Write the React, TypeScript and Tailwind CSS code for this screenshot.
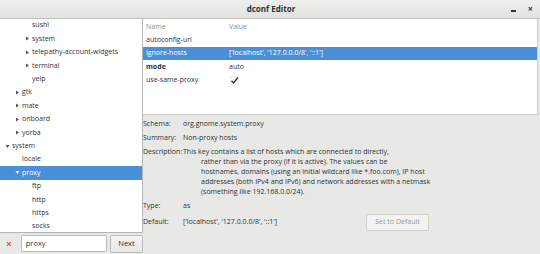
import React from 'react';

type TreeRow = { label: string; indent: number; arrow?: 'right' | 'down'; selected?: boolean };

const treeRows: TreeRow[] = [
  { label: 'sushi', indent: 32 },
  { label: 'system', indent: 32, arrow: 'right' },
  { label: 'telepathy-account-widgets', indent: 32, arrow: 'right' },
  { label: 'terminal', indent: 32, arrow: 'right' },
  { label: 'yelp', indent: 32 },
  { label: 'gtk', indent: 22, arrow: 'right' },
  { label: 'mate', indent: 22, arrow: 'right' },
  { label: 'onboard', indent: 22, arrow: 'right' },
  { label: 'yorba', indent: 22, arrow: 'right' },
  { label: 'system', indent: 12, arrow: 'down' },
  { label: 'locale', indent: 22 },
  { label: 'proxy', indent: 22, arrow: 'down', selected: true },
  { label: 'ftp', indent: 32 },
  { label: 'http', indent: 32 },
  { label: 'https', indent: 32 },
  { label: 'socks', indent: 32 },
];

const keys = [
  { name: 'autoconfig-url', value: '' },
  { name: 'ignore-hosts', value: "['localhost', '127.0.0.0/8', '::1']", selected: true },
  { name: 'mode', value: 'auto', bold: true },
  { name: 'use-same-proxy', value: 'check' },
];

const Arrow = ({ dir, light }: { dir: 'right' | 'down'; light?: boolean }) => (
  <svg width="5" height="5" viewBox="0 0 5 5" className="shrink-0">
    {dir === 'right' ? (
      <polygon points="1,0.5 4,2.5 1,4.5" fill={light ? '#ffffff' : '#555753'} />
    ) : (
      <polygon points="0.5,1 4.5,1 2.5,4" fill={light ? '#ffffff' : '#555753'} />
    )}
  </svg>
);

const Check = () => (
  <svg width="9" height="9" viewBox="0 0 9 9">
    <rect x="0.5" y="0.5" width="8" height="8" fill="none" stroke="#dcdcdc" strokeWidth="0.5" />
    <path d="M1.5 4.8 L3.6 6.9 L7.8 1.5" fill="none" stroke="#2e3436" strokeWidth="1.4" />
  </svg>
);

const descLines = [
  'rather than via the proxy (if it is active). The values can be',
  'hostnames, domains (using an initial wildcard like *.foo.com), IP host',
  'addresses (both IPv4 and IPv6) and network addresses with a netmask',
  '(something like 192.168.0.0/24).',
];

export default function App() {
  return (
    <div className="w-[540px] h-[254px] overflow-hidden bg-[#e8e8e7] text-[#2e3436] text-[7px] font-['Open_Sans',sans-serif] flex flex-col">
      {/* title bar */}
      <div className="h-[19px] shrink-0 flex items-center bg-gradient-to-b from-[#efefee] to-[#e2e2e0] border-b border-[#c4c2bd] relative">
        <div className="flex-1 text-center font-bold text-[8px] pl-[2px]">dconf Editor</div>
        <div className="absolute right-[24px] top-[10px] w-[5px] h-[1.5px] bg-[#2e3436]" />
        <div className="absolute right-[7px] top-[2px] text-[9px] font-bold leading-[14px]">×</div>
      </div>

      <div className="flex flex-1 min-h-0">
        {/* left column */}
        <div className="w-[143px] shrink-0 flex flex-col">
          <div className="h-[214px] bg-white border-r border-b border-[#b6b6b3] overflow-hidden">
            {treeRows.map((r, i) => (
              <div
                key={i}
                className={`h-[13.4px] flex items-center relative ${r.selected ? 'bg-[#4a90d9] text-white' : ''}`}
                style={{ paddingLeft: r.indent }}
              >
                {r.arrow && (
                  <span className="absolute top-[4px]" style={{ left: r.indent - 7 }}>
                    <Arrow dir={r.arrow} light={r.selected} />
                  </span>
                )}
                {r.label}
              </div>
            ))}
          </div>
          <div className="flex items-center h-[21px] relative">
            <svg width="6" height="6" viewBox="0 0 6 6" className="ml-[6px] mt-[1px]">
              <path d="M1 1 L5 5 M5 1 L1 5" stroke="#e05050" strokeWidth="1.2" />
            </svg>
            <div className="ml-[9px] w-[90px] h-[17px] bg-white border border-[#c0bdb8] rounded-[2px] flex items-center pl-[4px] text-[7.5px]">
              proxy
            </div>
            <div className="ml-[3px] w-[33px] h-[18px] shrink-0 rounded-[2px] border border-[#c0bdb8] bg-gradient-to-b from-[#f4f4f3] to-[#e6e6e4] flex items-center justify-center text-[7.5px]">
              Next
            </div>
          </div>
        </div>

        {/* right column */}
        <div className="flex-1 flex flex-col">
          <div className="h-[96px] mr-[2px] bg-white border-b border-r border-[#cfcdc9]">
            <div className="h-[14px] flex items-center text-[#8a8e8f] pt-[2px]">
              <span className="w-[86px] pl-[3px]">Name</span>
              <span>Value</span>
            </div>
            {keys.map((k, i) => (
              <div
                key={i}
                className={`h-[13.5px] flex items-center ${k.selected ? 'bg-[#4a90d9] text-white' : ''}`}
              >
                <span className={`w-[86px] pl-[3px] ${k.bold ? 'font-bold' : ''}`}>{k.name}</span>
                {k.value === 'check' ? (
                  <span className="pl-[1px] flex"><Check /></span>
                ) : (
                  <span>{k.value}</span>
                )}
              </div>
            ))}
          </div>

          <div className="flex flex-col pt-[2px]">
            <div className="h-[14px] flex items-center">
              <span className="w-[40px]">Schema:</span>
              <span>org.gnome.system.proxy</span>
            </div>
            <div className="h-[14px] flex items-center">
              <span className="w-[40px]">Summary:</span>
              <span>Non-proxy hosts</span>
            </div>
            <div className="flex flex-col leading-[10px] mt-[2px]">
              <div className="flex">
                <span className="w-[40px]">Description:</span>
                <span>This key contains a list of hosts which are connected to directly,</span>
              </div>
              {descLines.map((l, i) => (
                <div key={i} className="pl-[58px]">{l}</div>
              ))}
            </div>
            <div className="h-[14px] flex items-center mt-[2px]">
              <span className="w-[40px]">Type:</span>
              <span>as</span>
            </div>
            <div className="flex items-center h-[18px]">
              <span className="w-[40px]">Default:</span>
              <span className="w-[183px]">['localhost', '127.0.0.0/8', '::1']</span>
              <div className="w-[63px] h-[17px] border border-[#d3d0cc] rounded-[2px] bg-[#f3f3f2] text-[#9a9c9d] flex items-center justify-center">
                Set to Default
              </div>
            </div>
          </div>
        </div>
      </div>
    </div>
  );
}
